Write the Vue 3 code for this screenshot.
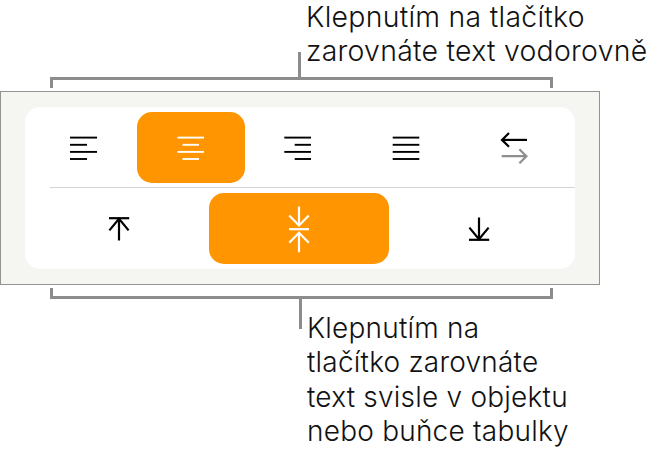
<template>
  <main class="page">
    <section class="callout callout-top">
      <p class="note">Klepnutím na tlačítko<br>zarovnáte text vodorovně</p>
      <span class="stem stem-top"></span>
    </section>
    <div class="bracket bracket-top"></div>

    <section class="panel">
      <div class="card">
        <div class="row row-five">
          <button v-for="b in horizontal" :key="b.id" class="btn" :class="{ active: b.active, arrows: b.gray }">
            <svg viewBox="0 0 40 40" width="40" height="40" fill="none">
              <path v-for="(d, i) in b.paths" :key="i" :d="d" />
              <path v-if="b.gray" class="gray" :d="b.gray" />
            </svg>
          </button>
        </div>
        <hr class="divider">
        <div class="row row-three">
          <button v-for="b in vertical" :key="b.id" class="btn arrows" :class="{ active: b.active }">
            <svg viewBox="0 0 40 40" width="40" height="40" fill="none">
              <path v-for="(d, i) in b.paths" :key="i" :d="d" />
            </svg>
          </button>
        </div>
      </div>
    </section>

    <div class="bracket bracket-bottom"></div>
    <section class="callout callout-bottom">
      <span class="stem stem-bottom"></span>
      <p class="note">Klepnutím na<br>tlačítko zarovnáte<br>text svisle v objektu<br>nebo buňce tabulky</p>
    </section>
  </main>
</template>

<script setup>
const horizontal = [
  { id: 'left', paths: ['M7 9.6H34', 'M7 16.8H24', 'M7 23.9H34', 'M7 31H24'] },
  { id: 'center', active: true, paths: ['M6.5 9.6H33', 'M11.5 16.8H28', 'M6.5 23.9H33', 'M11.5 31H28'] },
  { id: 'right', paths: ['M5.3 9.6H32', 'M15.7 16.8H32', 'M5.3 23.9H32', 'M15.7 31H32'] },
  { id: 'justify', paths: ['M5.7 9.6H32.3', 'M5.7 16.8H32.3', 'M5.7 23.9H32.3', 'M5.7 31H32.3'] },
  {
    id: 'direction',
    paths: ['M32 11.9H7.5', 'M14 5L7 11.9L14 18.8'],
    gray: 'M6.7 28.2H31M24.4 21.2L31.4 28.2L24.4 35.2'
  }
]

const vertical = [
  { id: 'top', paths: ['M10 9.2H30.2', 'M20 9.5V31.5', 'M10.4 21.4L20 9.8L29.6 21.4'] },
  { id: 'middle', active: true, paths: ['M20 -2.5V16.5', 'M10.2 6.5L20 16.5L29.8 6.5', 'M10 20.2H30', 'M20 23.8V43.2', 'M10.2 33.8L20 23.8L29.8 33.8'] },
  { id: 'bottom', paths: ['M10 30.8H30.2', 'M20 8.5V30.5', 'M10.4 18.6L20 30.2L29.6 18.6'] }
]
</script>

<style scoped>
.page {
  width: 649px;
  height: 454px;
  overflow: hidden;
  background: #fff;
  font-family: Inter, "Liberation Sans", sans-serif;
  font-weight: 300;
  color: #111;
}

.callout {
  position: relative;
}

.callout-top {
  height: 77px;
  padding-left: 306px;
}

.callout-bottom {
  padding: 12px 0 0 307px;
}

.note {
  margin: 0;
  font-size: 28px;
  line-height: 34.3px;
  letter-spacing: 0.22px;
  white-space: nowrap;
}

.callout-top .note {
  font-size: 28.4px;
  line-height: 34px;
  letter-spacing: 0.28px;
}

.stem {
  position: absolute;
  width: 3px;
  background: #8c8c8c;
}

.stem-top {
  left: 298px;
  top: 52px;
  height: 25px;
}

.stem-bottom {
  left: 299px;
  top: 0;
  height: 30px;
}

.bracket {
  width: 503px;
  height: 11px;
  margin-left: 50px;
  box-sizing: border-box;
  border: 3px solid #8c8c8c;
}

.bracket-top {
  border-bottom: 0;
  margin-bottom: 3px;
}

.bracket-bottom {
  border-top: 0;
  margin-top: 3px;
}

.panel {
  box-sizing: border-box;
  width: 600px;
  height: 194px;
  padding: 15px 24px;
  background: #f5f5f1;
  border: 1px solid #939393;
}

.card {
  height: 162px;
  width: 550px;
  box-sizing: border-box;
  padding: 5px 6px 5px 4px;
  background: #fff;
  border-radius: 15px;
}

.row {
  display: grid;
  height: 71px;
}

.row-five {
  grid-template-columns: repeat(5, 1fr);
}

.row-three {
  grid-template-columns: repeat(3, 1fr);
}

.divider {
  height: 1px;
  margin: 4px -6px 5px 21px;
  border: 0;
  background: #d4d4d4;
}

.btn {
  display: flex;
  align-items: center;
  justify-content: center;
  padding: 0;
  border: 0;
  border-radius: 15px;
  background: transparent;
}

.btn.active {
  background: #ff9500;
}

.btn svg {
  overflow: visible;
}

.btn path {
  stroke: #000;
  stroke-width: 1.9;
}

.btn.arrows path {
  stroke-width: 2.2;
}

.btn path.gray {
  stroke: #8e8e8e;
}

.btn.active path {
  stroke: #fff;
}
</style>
